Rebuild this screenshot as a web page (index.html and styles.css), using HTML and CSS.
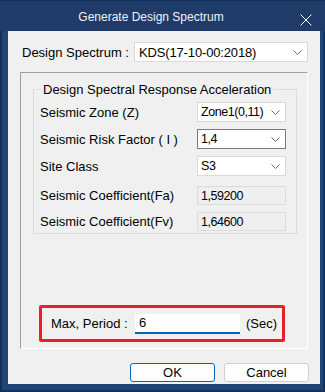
FILE: index.html
```html
<!DOCTYPE html>
<html>
<head>
<meta charset="utf-8">
<link rel="stylesheet" href="styles.css">
</head>
<body>
<div class="window">
  <div class="titlebar">
    <span class="title">Generate Design Spectrum</span>
    <svg class="close" width="12" height="12" viewBox="0 0 12 12"><path d="M0.5 0.5 L11.5 11.5 M11.5 0.5 L0.5 11.5" stroke="#ffffff" stroke-width="1" fill="none"/></svg>
  </div>
  <div class="client">
    <div class="top-row">
      <span class="top-label">Design Spectrum :</span>
      <div class="combo wide"><span class="val">KDS(17-10-00:2018)</span><svg class="chev" width="9" height="5" viewBox="0 0 9 5"><path d="M0.5 0.5 L4.5 4.5 L8.5 0.5" stroke="#6b6b6b" fill="none"/></svg></div>
    </div>
    <div class="outer">
      <fieldset class="group">
        <legend>Design Spectral Response Acceleration</legend>
        <div class="row r1">
          <span class="lbl">Seismic Zone (Z)</span>
          <div class="combo"><span class="val num">Zone1(0,11)</span><svg class="chev" width="9" height="5" viewBox="0 0 9 5"><path d="M0.5 0.5 L4.5 4.5 L8.5 0.5" stroke="#6b6b6b" fill="none"/></svg></div>
        </div>
        <div class="row r2">
          <span class="lbl">Seismic Risk Factor ( I )</span>
          <div class="combo focus"><span class="val num">1,4</span><svg class="chev" width="9" height="5" viewBox="0 0 9 5"><path d="M0.5 0.5 L4.5 4.5 L8.5 0.5" stroke="#6b6b6b" fill="none"/></svg></div>
        </div>
        <div class="row r3">
          <span class="lbl">Site Class</span>
          <div class="combo"><span class="val num">S3</span><svg class="chev" width="9" height="5" viewBox="0 0 9 5"><path d="M0.5 0.5 L4.5 4.5 L8.5 0.5" stroke="#6b6b6b" fill="none"/></svg></div>
        </div>
        <div class="row r4">
          <span class="lbl">Seismic Coefficient(Fa)</span>
          <div class="ro"><span class="num">1,59200</span></div>
        </div>
        <div class="row r5">
          <span class="lbl">Seismic Coefficient(Fv)</span>
          <div class="ro"><span class="num">1,64600</span></div>
        </div>
      </fieldset>
      <div class="period">
        <span class="plabel">Max, Period :</span>
        <div class="pinput">6</div>
        <span class="unit">(Sec)</span>
      </div>
    </div>
    <div class="buttons">
      <div class="btn ok">OK</div>
      <div class="btn">Cancel</div>
    </div>
  </div>
</div>
</body>
</html>
```
FILE: styles.css
```css
html, body {
  margin: 0;
  padding: 0;
  background: #1f4373;
}
body {
  font-family: "Liberation Sans", Arial, sans-serif;
  font-size: 13px;
  color: #000;
}
.window {
  width: 325px;
  height: 392px;
  box-sizing: border-box;
  border: 2px solid #15305a;
  border-top: 1px solid #15305a;
  background: #1f4677;
  display: flex;
  flex-direction: column;
}
.titlebar {
  height: 30px;
  background: #1f3c68;
  margin: 0 -2px;
  position: relative;
  display: flex;
  align-items: center;
}
.title {
  color: #eef1f5;
  font-size: 12px;
  width: 302px;
  text-align: center;
  padding-top: 1px;
}
.close {
  position: absolute;
  left: 300px;
  top: 13px;
}
.client {
  background: #f0f0f0;
  margin-left: 6px;
  margin-right: 3px;
  height: 353px;
  box-sizing: border-box;
  padding-top: 11px;
}
.top-row {
  display: flex;
  align-items: center;
  height: 20px;
}
.top-label {
  margin-left: 14px;
  width: 112px;
}
.combo {
  box-sizing: border-box;
  width: 89px;
  height: 20px;
  background: #fff;
  border: 1px solid #d9d9d9;
  display: flex;
  align-items: center;
  justify-content: space-between;
  padding: 0 5px 0 3px;
}
.combo.wide {
  width: 174px;
  padding-left: 4px;
}
.combo.focus {
  border-color: #7a7a7a;
}
.val {
  white-space: nowrap;
}
.combo.wide .val {
  letter-spacing: -0.15px;
}
.num {
  font-size: 12.5px;
  letter-spacing: -0.45px;
}
.chev {
  flex: none;
}
.outer {
  margin: 10px 0 0 12px;
  width: 288px;
  height: 277px;
  box-sizing: border-box;
  border-top: 1px solid #a0a0a0;
  border-left: 1px solid #a0a0a0;
  border-right: 1px solid #ffffff;
  border-bottom: 1px solid #ffffff;
  display: flex;
  flex-direction: column;
}
.group {
  margin: 9px 10px 0 12px;
  padding: 0 0 10px 0;
  border: 1px solid #dcdcdc;
  height: 152px;
  box-sizing: border-box;
  min-width: 0;
}
.group legend {
  margin-left: 7px;
  padding: 0 2px;
  line-height: 15px;
}
.row {
  display: flex;
  align-items: center;
  justify-content: space-between;
  padding: 0 10px 0 6px;
}
.r1 { margin-top: 5px; }
.r2 { margin-top: 7px; }
.r3 { margin-top: 7px; }
.r4 { margin-top: 10px; }
.r5 { margin-top: 7px; }
.ro {
  box-sizing: border-box;
  width: 89px;
  height: 19px;
  background: #efefef;
  border: 1px solid #dcdcdc;
  padding-left: 3px;
  display: flex;
  align-items: center;
}
.period {
  margin: auto 0 6px 18px;
  width: 246px;
  height: 37px;
  box-sizing: border-box;
  border: 3px solid #e8202a;
  border-radius: 2px;
  display: flex;
  align-items: center;
  padding-left: 9px;
}
.plabel {
  width: 84px;
}
.pinput {
  box-sizing: border-box;
  width: 105px;
  height: 20px;
  background: #fff;
  border-bottom: 2px solid #0067c0;
  padding-left: 4px;
  line-height: 18px;
}
.unit {
  margin-left: 6px;
}
.buttons {
  display: flex;
  justify-content: flex-end;
  gap: 9px;
  margin: 14px 11px 0 0;
}
.btn {
  box-sizing: border-box;
  width: 85px;
  height: 19px;
  border: 1px solid #d0d0d0;
  border-radius: 3px;
  background: #fdfdfd;
  display: flex;
  align-items: center;
  justify-content: center;
}
.btn.ok {
  border-color: #0067c0;
}
```
